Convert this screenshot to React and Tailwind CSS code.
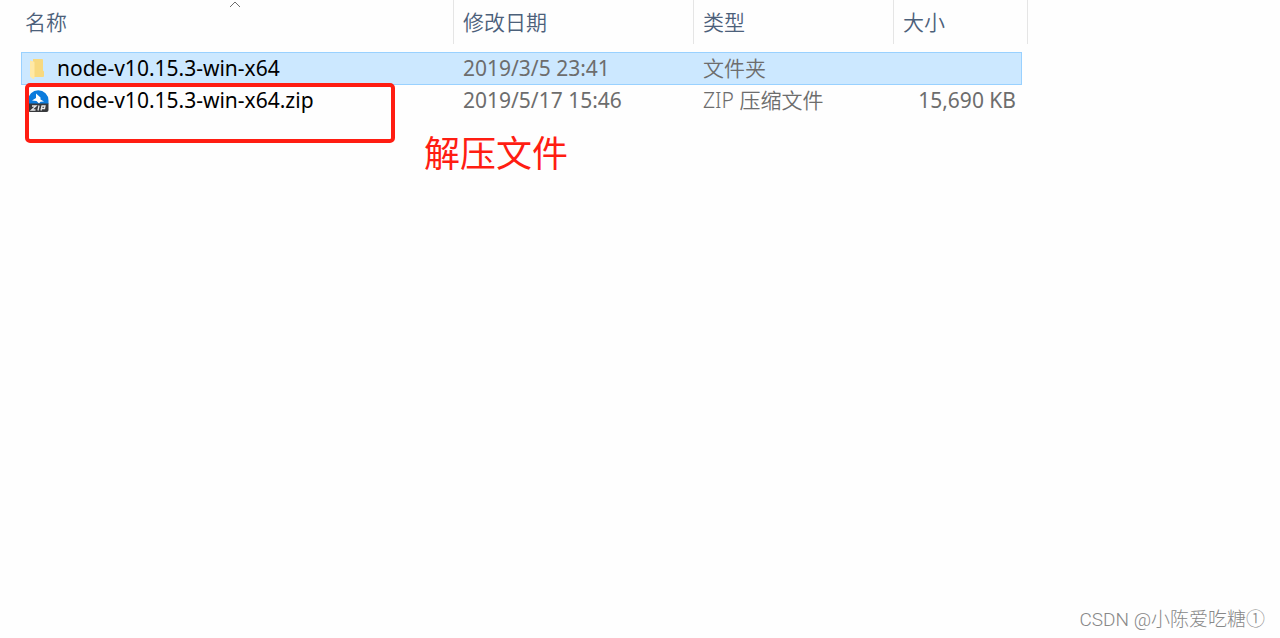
const files = [
  { name: 'node-v10.15.3-win-x64', date: '2019/3/5 23:41', type: '文件夹', size: '', kind: 'folder', selected: true },
  { name: 'node-v10.15.3-win-x64.zip', date: '2019/5/17 15:46', type: 'ZIP 压缩文件', size: '15,690 KB', kind: 'zip', selected: false },
]

const columns = ['名称', '修改日期', '类型', '大小']

function FolderIcon() {
  return (
    <svg className="h-[22px] w-[22px] shrink-0" viewBox="0 0 22 22" aria-hidden="true">
      <path d="M5 1h9a1 1 0 0 1 1 1v10.500l1 1V18a1 1 0 0 1-1 1H5z" fill="#f8d97f" />
      <path d="M2 2.500 5.500 3.500a1 1 0 0 1 1 1V20a1 1 0 0 1-1.500.8L2.500 19a1 1 0 0 1-.5-1z" fill="#ffe9a6" />
    </svg>
  )
}

function ZipIcon() {
  return (
    <svg className="h-[22px] w-[22px] shrink-0" viewBox="0 0 22 22" aria-hidden="true">
      <path d="M0 14V10.500a10.250 10.250 0 0 1 20.500 0V14z" fill="#0b7bdc" />
      <path d="M8 3.500 12.500 7.500v2L16 11.500l-3.500.2L11 13.500 8.500 11 4 10.500 8 8z" fill="#fff" />
      <path d="M0 13.500h20.500V20a2 2 0 0 1-2 2H2a2 2 0 0 1-2-2z" fill="#37393c" />
      <path d="M4 16h4l-4.500 4h4M11 15.500l-1 5M13 20.500l1-4.500h3l-.5 2.500h-3" fill="none" stroke="#e8e8e8" strokeWidth="1.300" />
    </svg>
  )
}

function FileRow({ file }) {
  const cell = file.selected ? 'border-y border-[#99d1ff] bg-[#cce8ff]' : 'border-transparent'
  return (
    <tr className="text-[21px] leading-[31px] text-[#6d6d6d]">
      <td className={`${cell} border-l p-0 pl-[6px] text-black`}>
        <div className="flex items-center gap-[7px]">
          {file.kind === 'folder' ? <FolderIcon /> : <ZipIcon />}
          <span>{file.name}</span>
        </div>
      </td>
      <td className={`${cell} p-0 pl-[9px]`}>{file.date}</td>
      <td className={`${cell} p-0 pl-[9px] font-[350]`}>{file.type}</td>
      <td className={`${cell} border-r p-0 pr-[5px] text-right`}>{file.size}</td>
      <td className="p-0" />
    </tr>
  )
}

export default function App() {
  return (
    <main className="relative min-h-screen bg-[#fefefe] pl-[21px] font-['Noto_Sans','Noto_Sans_CJK_SC',sans-serif]">
      <table className="w-full max-w-[1007px] table-fixed border-separate border-spacing-0 whitespace-nowrap">
        <colgroup>
          <col className="w-[433px]" />
          <col className="w-[240px]" />
          <col className="w-[200px]" />
          <col className="w-[128px]" />
          <col className="w-[6px]" />
        </colgroup>
        <thead>
          <tr className="h-11">
            {columns.map((label, i) => (
              <th key={label} scope="col" colSpan={i === 3 ? 2 : 1} className="relative border-r border-[#e5e5e5] p-0 text-left font-[350]">
                <button type="button" className={`block w-full text-left text-[21px] leading-[44px] text-[#4c607a] ${i === 0 ? 'pl-1' : 'pl-[9px]'}`}>
                  {label}
                </button>
                {i === 0 && (
                  <svg className="absolute top-0 left-[208px] h-2 w-3" viewBox="0 0 12 8" fill="none" stroke="#6d6d6d" aria-hidden="true">
                    <path d="M1 7l5-5 5 5" />
                  </svg>
                )}
              </th>
            ))}
          </tr>
        </thead>
        <tbody>
          <tr className="h-2" aria-hidden="true">
            <td colSpan={5} className="p-0" />
          </tr>
          {files.map((file) => (
            <FileRow key={file.name} file={file} />
          ))}
        </tbody>
      </table>

      {/* annotation over the zip row */}
      <div className="absolute top-[83px] left-[25px] h-[60px] w-[370px] rounded-[5px] border-4 border-[#ff1d12]" />
      <p className="absolute top-[130px] left-[424px] text-[36px] leading-[48px] text-[#ff1d12]">解压文件</p>

      <footer className="absolute right-[15px] bottom-[4px] font-['Roboto','Noto_Sans_CJK_SC',sans-serif] text-[19px] leading-[28px] font-light text-[#888888]">
        CSDN @小陈爱吃糖①
      </footer>
    </main>
  )
}
